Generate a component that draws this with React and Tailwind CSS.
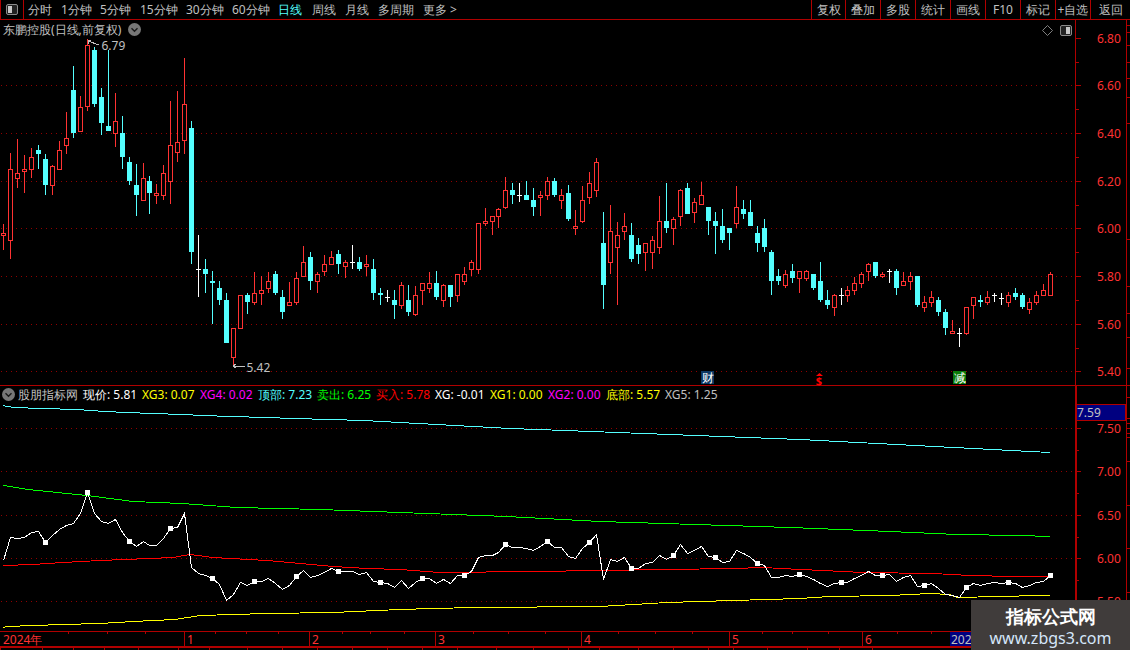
const RED = "#ff3232";
const CYAN = "#54ffff";
const LINE = "#b00000";
const DOT = "#900000";

const CANDLES = `224 233 236 250 r,153 169 241 259 r,139 173 179 188 r,155 169 172 193 r,148 157 170 178 r,145 150 154 169 c,154 159 185 195 c,165 166 186 195 r,141 150 170 170 r,112 138 146 154 r,66 90 133 138 c,96 107 132 132 r,39 45 107 111 r,47 50 104 107 c,88 97 123 135 c,50 126 131 131 c,93 121 134 147 r,116 133 157 169 c,157 162 181 185 c,164 185 195 216 c,163 178 201 201 r,176 181 193 214 c,184 193 196 204 r,165 173 196 200 r,101 145 182 204 r,91 142 153 162 r,58 104 141 154 r,121 128 252 264 c,235 269 269 297 w,259 269 274 293 c,271 281 283 324 c,281 288 300 305 c,293 300 343 343 c,328 328 358 366 r,295 295 329 329 r,293 295 302 314 c,272 293 303 305 r,276 290 294 305 r,272 281 289 293 r,271 274 293 295 c,290 297 312 319 c,282 302 306 306 r,272 278 303 305 r,246 262 277 277 r,252 257 281 290 c,272 274 282 293 r,255 264 272 276 r,251 257 265 265 r,250 254 264 274 c,260 262 267 278 r,245 262 262 269 w,257 262 269 271 c,255 264 267 276 r,259 269 293 300 c,288 293 295 305 c,290 297 297 302 w,290 300 305 319 c,282 285 306 309 r,285 300 312 316 c,286 295 315 316 r,283 283 291 305 r,272 283 289 293 r,271 283 297 300 c,284 285 301 307 r,285 285 297 307 c,274 274 296 302 r,267 274 282 285 r,260 262 270 276 r,223 223 270 274 r,208 221 224 226 r,216 216 222 235 r,208 209 217 228 r,177 190 208 209 r,183 190 195 204 c,183 195 195 202 w,181 195 200 200 c,188 200 207 216 c,191 195 198 216 r,177 181 196 200 r,178 181 195 197 c,189 195 201 209 r,185 193 219 221 c,210 226 229 235 r,186 200 222 223 r,172 183 198 204 r,158 162 191 197 r,212 243 285 309 c,205 231 263 274 r,222 235 248 305 r,213 226 232 240 r,223 235 259 262 c,238 245 254 264 c,243 243 253 271 r,236 240 253 269 r,196 221 248 254 r,183 221 228 233 c,217 219 229 245 r,189 190 217 226 r,183 188 214 214 c,198 202 213 223 r,182 195 205 205 r,207 207 221 235 c,212 221 226 254 c,209 226 240 243 c,228 228 233 250 c,186 207 224 228 r,200 209 214 219 c,200 212 226 226 c,226 233 243 252 c,219 228 247 252 c,250 252 281 295 c,269 276 281 285 c,270 274 286 288 r,264 271 278 283 c,271 271 279 293 r,270 271 279 281 r,274 274 288 290 c,262 281 300 302 c,290 300 305 309 c,294 295 308 316 r,288 295 295 305 w,286 290 296 302 r,277 283 291 295 r,272 274 284 288 r,263 264 272 281 r,262 262 276 278 c,272 274 277 278 r,269 271 271 283 w,269 271 288 295 c,272 281 286 286 r,272 276 282 290 r,276 276 305 307 c,296 302 308 312 r,291 297 303 307 r,297 300 312 316 c,309 312 328 335 c,320 331 334 334 r,328 333 333 347 w,307 307 334 335 r,297 297 306 319 r,295 300 302 307 c,291 297 303 305 r,293 295 295 302 w,293 298 298 305 w,292 295 303 307 r,288 293 297 300 c,293 295 307 309 c,298 302 310 314 r,291 295 303 305 r,284 290 296 296 r,272 274 296 296 r`
  .split(",")
  .map((s) => s.split(" "))
  .map(([h, t, b, l, k]) => ({ h: +h, t: +t, b: +b, l: +l, k }));

const cx = (i) => Math.floor(3.4 + 6.98 * i);

const WHITE_Y = [
  560, 536.7, 538.3, 536.7, 532, 531, 541.7, 535, 529, 525, 523.3, 513.3, 491.7, 513.3, 520.7, 523.3, 519.3, 531.7, 540.7, 546, 540.7, 545.3, 545.3, 538.3, 528, 527, 513.3, 567.3, 573.3, 575, 578, 584, 600.3, 594, 582.3, 585.3, 581, 580.7, 577.7, 582.7, 588.7, 585.3, 576, 570.3, 577.3, 575.3, 572, 568.3, 570.7, 570.7, 570.7, 573.7, 571.7, 581, 582, 583.3, 586.7,
  580, 588.3, 582.3, 578, 578, 583.3, 579.3, 583.3, 575.3, 575.3, 570.7, 556.7, 554.7, 554.7, 551.7, 543.7, 546.7, 546.7, 548.3, 550.3, 545.7, 541, 546.7, 546.7, 555.7, 557.7, 547.7, 542, 534.3, 579.3, 559.3, 561.3, 557.3, 568.3, 568.3, 563.3, 562.3, 555.3, 558.7, 554.7, 544.3, 553.3, 549.7, 546.3, 555.7, 557, 562.3, 561.3, 550.3, 553.3, 556.7, 562.7, 565.3, 577.3, 577.3, 575.3, 576.3, 574,
  576, 579.3, 583.3, 586.3, 583.3, 581.7, 581.7, 578.3, 575, 571.3, 574.7, 575, 574, 580.7, 577.3, 575.3, 586.3, 585, 583.3, 588.3, 594.3, 595, 597.3, 587, 583.3, 585.3, 583.3, 582.3, 583.3, 581.7, 583.3, 587.3, 585, 581.7, 580.7, 575,
];

const whitePts = WHITE_Y.map((y, i) => `${cx(i) + 0.5},${Math.round(y) + 0.5}`).join(" ");

const CYAN_LINE = "3,405 7,406 14,407 42,408 77,409 91,410 105,411 126,412 154,413 182,414 203,415 231,416 266,417 294,418 329,419 364,420 400,422 510,428 565,430 800,439 1050,452";
const GREEN_LINE = "3,485 10,486 28,489 87,495 133,501 182,503 237,507 320,509 400,512 507,516 600,521 790,527 890,531 957,534 1020,535 1050,536";
const RED_LINE = "3,565 33,564 63,562 100,560 150,558 173,557 190,554 213,557 267,560 300,563 333,566 367,568 400,569 440,572 533,571 600,570 667,569 733,568 763,567 800,569 823,570 863,572 933,573 970,575 1013,576 1050,576";
const YELLOW_LINE = "3,627 7,626 33,625 63,624 100,623 133,621 175,619 200,615 267,613 333,612 400,609 433,608 475,607 600,606 667,602 733,600 800,598 830,596 890,595 930,593 950,594 957,597 1040,595 1050,595";

const MAIN_GRID = [85, 133, 181, 228, 276, 324, 371];
const IND_GRID = [428, 471, 515, 558, 601];
const MAIN_LABELS = [["6.80", 38], ["6.60", 85], ["6.40", 133], ["6.20", 181], ["6.00", 228], ["5.80", 276], ["5.60", 324], ["5.40", 371]];
const IND_LABELS = [["7.50", 428], ["7.00", 471], ["6.50", 515], ["6.00", 558], ["5.50", 601]];

const LEFT_TABS = [
  ["分时", "w-[33px] text-[#c0c0c0]"],
  ["1分钟", "w-[39px] text-[#c0c0c0]"],
  ["5分钟", "w-[40px] text-[#c0c0c0]"],
  ["15分钟", "w-[46px] text-[#c0c0c0]"],
  ["30分钟", "w-[46px] text-[#c0c0c0]"],
  ["60分钟", "w-[46px] text-[#c0c0c0]"],
  ["日线", "w-[34px] text-[#54ffff]"],
  ["周线", "w-[33px] text-[#c0c0c0]"],
  ["月线", "w-[33px] text-[#c0c0c0]"],
  ["多周期", "w-[45px] text-[#c0c0c0]"],
  ["更多 >", "w-[40px] text-[#c0c0c0]"],
];
const RIGHT_TABS = [
  ["复权", "w-[34px]"],
  ["叠加", "w-[35px]"],
  ["多股", "w-[35px]"],
  ["统计", "w-[35px]"],
  ["画线", "w-[35px]"],
  ["F10", "w-[35px]"],
  ["标记", "w-[35px]"],
  ["+自选", "w-[35px]"],
  ["返回", "w-[40px]"],
];
const READOUTS = [
  ["现价: 5.81", "w-[59px] text-white"],
  ["XG3: 0.07", "w-[58px] text-[#ffff00]"],
  ["XG4: 0.02", "w-[58px] text-[#ff00ff]"],
  ["顶部: 7.23", "w-[59px] text-[#54ffff]"],
  ["卖出: 6.25", "w-[59px] text-[#00ff00]"],
  ["买入: 5.78", "w-[59px] text-[#ff0000]"],
  ["XG: -0.01", "w-[55px] text-white"],
  ["XG1: 0.00", "w-[58px] text-[#ffff00]"],
  ["XG2: 0.00", "w-[58px] text-[#ff00ff]"],
  ["底部: 5.57", "w-[59px] text-[#ffff00]"],
  ["XG5: 1.25", "w-[60px] text-[#c0c0c0]"],
];
const MONTHS = [["1", 184], ["2", 309], ["3", 435], ["4", 581], ["5", 729], ["6", 862]];
const X_TICKS = [68, 107, 145, 215, 246, 278, 342, 370, 404, 473, 508, 545, 618, 655, 692, 762, 792, 828, 897, 931];
const BOTTOM_DIV = [0, 42, 73, 104, 138, 178, 209, 247, 282, 317, 352, 387, 422, 457, 496, 533, 568, 599, 638, 673, 708, 733, 767, 807, 839, 872];

function Candle({ c, i }) {
  const x = cx(i);
  if (c.k === "w") {
    return (
      <g fill="#ffffff">
        <rect x={x} y={c.h} width={1} height={c.l - c.h} />
        <rect x={x - 2} y={c.t} width={5} height={1} />
      </g>
    );
  }
  if (c.k === "c") {
    return (
      <g fill={CYAN}>
        <rect x={x} y={c.h} width={1} height={c.l - c.h} />
        <rect x={x - 2} y={c.t} width={5} height={c.b - c.t} />
      </g>
    );
  }
  return (
    <g>
      {c.t > c.h && <rect x={x} y={c.h} width={1} height={c.t - c.h} fill={RED} />}
      {c.l > c.b && <rect x={x} y={c.b} width={1} height={c.l - c.b} fill={RED} />}
      <rect x={x - 1.5} y={c.t + 0.5} width={4} height={Math.max(c.b - c.t - 1, 1)} fill="#000" stroke={RED} strokeWidth={1} />
    </g>
  );
}

function RoundChevron({ className }) {
  return (
    <svg viewBox="0 0 13 13" className={className}>
      <circle cx="6.5" cy="6.5" r="6.5" fill="#777777" />
      <path d="M3.5 5.2 L6.5 8.2 L9.5 5.2" fill="none" stroke="#1a1a1a" strokeWidth="1.4" />
    </svg>
  );
}

function PanelIcon({ className, bar }) {
  return (
    <svg viewBox="0 0 12 11" className={className}>
      <rect x="0.5" y="0.5" width="11" height="10" rx="1.5" fill="#222" stroke="#8a8a8a" />
      <rect x={bar} y="2" width="4" height="7" fill="#c8c8c8" />
    </svg>
  );
}

function AxisSvg({ left, top, height, labels, children }) {
  return (
    <svg width={1126 - left} height={height} viewBox={`${left} ${top} ${1126 - left} ${height}`} className="block" shapeRendering="crispEdges">
      {labels.map(([t, y]) => (
        <g key={t}>
          <rect x={1076} y={y} width={5} height={1} fill={LINE} />
          <rect x={1076} y={y + (y < 400 ? 24 : 22)} width={3} height={1} fill={LINE} />
          <text x={1097} y={y + 4.5} fill={RED} fontSize="12">{t}</text>
        </g>
      ))}
      {children}
    </svg>
  );
}

function Strip({ ticks, top, height }) {
  return (
    <svg width={3} height={height} viewBox={`0 ${top} 3 ${height}`} className="block" shapeRendering="crispEdges">
      {ticks.map((y) => <rect key={y} x={0} y={y} width={3} height={1} fill={LINE} />)}
    </svg>
  );
}

export default function App() {
  return (
    <div className="relative w-[1130px] h-[650px] overflow-hidden bg-black text-[12px] leading-none text-[#c0c0c0] [font-family:'Liberation_Sans','Noto_Sans_CJK_SC',sans-serif]">
      {/* toolbar */}
      <div className="flex h-[20px] items-stretch justify-between border-b border-[#b00000]">
        <div className="flex items-center">
          <div className="flex h-full w-[24px] items-center justify-center border-x border-[#b00000]">
            <PanelIcon className="h-[11px] w-[12px]" bar={2} />
          </div>
          <div className="flex pl-[4px]">
            {LEFT_TABS.map(([t, c]) => (
              <span key={t} className={`whitespace-nowrap ${c}`}>{t}</span>
            ))}
          </div>
        </div>
        <div className="flex">
          {RIGHT_TABS.map(([t, c]) => (
            <span key={t} className={`flex items-center justify-center whitespace-nowrap border-l border-[#b00000] ${c}`}>{t}</span>
          ))}
        </div>
      </div>

      {/* main pane */}
      <div className="flex h-[366px] border-b border-[#b00000]">
        <div className="relative w-[1075px]">
          <svg width={1075} height={365} viewBox="0 20 1075 365" className="block" shapeRendering="crispEdges">
            {MAIN_GRID.map((y) => (
              <line key={y} x1={1} x2={1075} y1={y + 0.5} y2={y + 0.5} stroke={DOT} strokeDasharray="1 4" />
            ))}
            {CANDLES.map((c, i) => <Candle key={i} c={c} i={i} />)}
            <g stroke="#c0c0c0" fill="none">
              <path d="M88 41 L99 45 M88 41 L91 40 M88 41 L89 44" />
              <path d="M233 366 L245 366 M233 366 L236 364 M233 366 L236 368" />
            </g>
            <text x={101.5} y={50} fill="#c0c0c0" fontSize="12">6.79</text>
            <text x={246.5} y={371.5} fill="#c0c0c0" fontSize="12">5.42</text>
          </svg>
          <div className="absolute left-[3px] top-[3px] flex items-center">
            <span className="w-[125px] whitespace-nowrap">东鹏控股(日线,前复权)</span>
            <RoundChevron className="h-[13px] w-[13px]" />
          </div>
          <svg viewBox="0 0 11 11" className="absolute left-[1042px] top-[5px] h-[11px] w-[11px]">
            <path d="M5.5 0.5 L10.5 5.5 L5.5 10.5 L0.5 5.5 Z" fill="none" stroke="#808080" />
          </svg>
          <PanelIcon className="absolute left-[1060px] top-[5px] h-[11px] w-[12px]" bar={6} />
          <div className="absolute left-[701px] top-[351px] flex h-[13px] w-[13px] items-center justify-center bg-[#0b3763] text-white">财</div>
          <div className="absolute left-[815px] top-[353px] flex w-[8px] flex-col items-center text-[#ff0000]">
            <svg viewBox="0 0 7 3" className="h-[3px] w-[7px]">
              <path d="M3.5 0 L7 3 L0 3 Z" fill="#ff0000" />
            </svg>
            <span className="text-[11px] leading-[9px] font-bold">$</span>
          </div>
          <div className="absolute left-[953px] top-[351px] flex h-[13px] w-[13px] items-center justify-center bg-[#0a7a0a] text-white">减</div>
        </div>
        <div className="w-[51px] border-l border-[#b00000]">
          <AxisSvg left={1076} top={20} height={365} labels={MAIN_LABELS} />
        </div>
        <div className="flex-1 border-l border-[#b00000]">
          <Strip top={20} height={365} ticks={[25, 32, 45, 62, 78, 97, 123, 239, 286, 313, 337, 368]} />
        </div>
      </div>

      {/* indicator pane */}
      <div className="flex h-[245px]">
        <div className="relative w-[1075px]">
          <svg width={1075} height={245} viewBox="0 386 1075 245" className="block" shapeRendering="crispEdges">
            {IND_GRID.map((y) => (
              <line key={y} x1={1} x2={1075} y1={y + 0.5} y2={y + 0.5} stroke={DOT} strokeDasharray="1 4" />
            ))}
            <g fill="none" strokeWidth="1" transform="translate(0 0.5)">
              <polyline points={CYAN_LINE} stroke={CYAN} />
              <polyline points={GREEN_LINE} stroke="#00ff00" />
              <polyline points={RED_LINE} stroke="#ff0000" />
              <polyline points={YELLOW_LINE} stroke="#ffff00" />
            </g>
            <polyline points={whitePts} fill="none" stroke="#ffffff" />
            {WHITE_Y.map((y, i) =>
              i % 6 === 0 && i > 0 ? (
                <rect key={i} x={cx(i) - 2} y={Math.round(y) - 2} width={5} height={5} fill="#ffffff" />
              ) : null
            )}
          </svg>
          <div className="absolute left-[2px] top-[2px] flex items-center">
            <RoundChevron className="h-[13px] w-[13px]" />
            <span className="ml-[3px] w-[65px] whitespace-nowrap">股朋指标网</span>
            {READOUTS.map(([t, c]) => (
              <span key={t} className={`whitespace-nowrap ${c}`}>{t}</span>
            ))}
          </div>
        </div>
        <div className="w-[51px] border-l-2 border-[#b00000]">
          <AxisSvg left={1077} top={386} height={245} labels={IND_LABELS}>
            <rect x={1076} y={404} width={50} height={17} fill={LINE} />
            <rect x={1077} y={405} width={48} height={15} fill="#000080" />
            <text x={1077} y={417} fill="#c0c0c0" fontSize="12">7.59</text>
          </AxisSvg>
        </div>
        <div className="flex-1 border-l border-[#b00000]">
          <Strip top={386} height={245} ticks={[397, 418, 423, 428, 433, 437, 461, 505, 548, 592]} />
        </div>
      </div>

      {/* date axis */}
      <div className="relative h-[16px] border-y border-[#b00000] text-[#ff3232]">
        <span className="absolute left-[3px] top-[2px]">2024年</span>
        {MONTHS.map(([t, x]) => (
          <span key={t} className="absolute top-0 h-[14px] border-l border-[#b00000] pl-[2px] pt-[2px]" style={{ left: x }}>{t}</span>
        ))}
        {X_TICKS.map((x) => (
          <span key={x} className="absolute top-0 h-[2px] w-px bg-[#b00000]" style={{ left: x }} />
        ))}
        <span className="absolute left-[950px] top-0 h-[14px] w-[45px] whitespace-nowrap bg-[#000080] pl-[1px] pt-[2px] text-[#c0c0c0]">2025年</span>
      </div>

      {/* bottom tabs */}
      <div className="relative h-[4px] border-t border-[#b00000]">
        {BOTTOM_DIV.map((x) => (
          <span key={x} className="absolute top-0 h-[3px] w-px bg-[#b00000]" style={{ left: x }} />
        ))}
      </div>

      {/* watermark */}
      <div className="absolute left-[971px] top-[600px] flex h-[50px] w-[159px] flex-col items-center bg-[#403c3b] pt-[5px]">
        <span className="text-[18px] font-bold leading-[22px] text-white">指标公式网</span>
        <span className="mt-[1px] text-[16px] leading-[20px] text-[#d5e6fa]">www.zbgs3.com</span>
      </div>
    </div>
  );
}
